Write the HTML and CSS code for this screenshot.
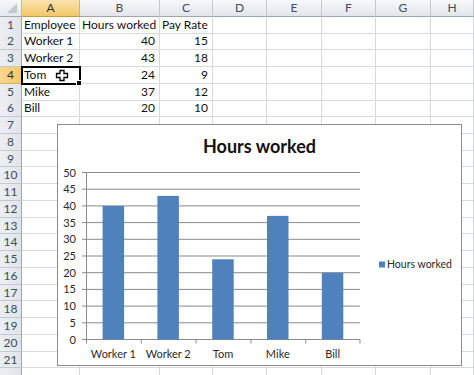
FILE: index.html
```html
<!DOCTYPE html>
<html>
<head>
<meta charset="utf-8">
<link rel="stylesheet" href="styles.css">
</head>
<body>
<div class="sheet">
  <div class="r hdr">
    <b class="corner"><svg width="22" height="17" viewBox="0 0 22 17"><polygon points="17,3 17,13 7,13" fill="#c3c8cf"/></svg></b>
    <b class="ch on">A</b><b class="ch">B</b><b class="ch">C</b><b class="ch">D</b><b class="ch">E</b><b class="ch">F</b><b class="ch">G</b><b class="ch">H</b>
  </div>
  <div class="r"><b class="rh">1</b><span>Employee</span><span>Hours worked</span><span>Pay Rate</span><span></span><span></span><span></span><span></span><span></span></div>
  <div class="r"><b class="rh">2</b><span>Worker 1</span><span class="n">40</span><span class="n">15</span><span></span><span></span><span></span><span></span><span></span></div>
  <div class="r"><b class="rh">3</b><span>Worker 2</span><span class="n">43</span><span class="n">18</span><span></span><span></span><span></span><span></span><span></span></div>
  <div class="r"><b class="rh on">4</b><span class="sel">Tom<svg class="cursor" width="14" height="13" viewBox="0 0 14 13"><path d="M5 1.5H9V4.5H12.5V8.5H9V11.5H5V8.5H1.5V4.5H5Z" fill="#fff" stroke="#000" stroke-width="1.3" stroke-linejoin="miter"/></svg></span><span class="n">24</span><span class="n">9</span><span></span><span></span><span></span><span></span><span></span></div>
  <div class="r"><b class="rh">5</b><span>Mike</span><span class="n">37</span><span class="n">12</span><span></span><span></span><span></span><span></span><span></span></div>
  <div class="r"><b class="rh">6</b><span>Bill</span><span class="n">20</span><span class="n">10</span><span></span><span></span><span></span><span></span><span></span></div>
  <div class="r"><b class="rh">7</b><span></span><span></span><span></span><span></span><span></span><span></span><span></span><span></span></div>
  <div class="r"><b class="rh">8</b><span></span><span></span><span></span><span></span><span></span><span></span><span></span><span></span></div>
  <div class="r"><b class="rh">9</b><span></span><span></span><span></span><span></span><span></span><span></span><span></span><span></span></div>
  <div class="r"><b class="rh">10</b><span></span><span></span><span></span><span></span><span></span><span></span><span></span><span></span></div>
  <div class="r"><b class="rh">11</b><span></span><span></span><span></span><span></span><span></span><span></span><span></span><span></span></div>
  <div class="r"><b class="rh">12</b><span></span><span></span><span></span><span></span><span></span><span></span><span></span><span></span></div>
  <div class="r"><b class="rh">13</b><span></span><span></span><span></span><span></span><span></span><span></span><span></span><span></span></div>
  <div class="r"><b class="rh">14</b><span></span><span></span><span></span><span></span><span></span><span></span><span></span><span></span></div>
  <div class="r"><b class="rh">15</b><span></span><span></span><span></span><span></span><span></span><span></span><span></span><span></span></div>
  <div class="r"><b class="rh">16</b><span></span><span></span><span></span><span></span><span></span><span></span><span></span><span></span></div>
  <div class="r"><b class="rh">17</b><span></span><span></span><span></span><span></span><span></span><span></span><span></span><span></span></div>
  <div class="r"><b class="rh">18</b><span></span><span></span><span></span><span></span><span></span><span></span><span></span><span></span></div>
  <div class="r"><b class="rh">19</b><span></span><span></span><span></span><span></span><span></span><span></span><span></span><span></span></div>
  <div class="r"><b class="rh">20</b><span></span><span></span><span></span><span></span><span></span><span></span><span></span><span></span></div>
  <div class="r"><b class="rh">21</b><span></span><span></span><span></span><span></span><span></span><span></span><span></span><span></span></div>
  <div class="r"><b class="rh"></b><span></span><span></span><span></span><span></span><span></span><span></span><span></span><span></span></div>

  <div class="chart">
    <svg class="plot" width="403" height="240" viewBox="0 0 403 240">
      <text class="title" x="201.5" y="27.7" text-anchor="middle">Hours worked</text>
      <g stroke="#8a8a8a" stroke-width="1">
        <line x1="24" x2="302" y1="47.5" y2="47.5"/>
        <line x1="24" x2="302" y1="64.2" y2="64.2"/>
        <line x1="24" x2="302" y1="80.9" y2="80.9"/>
        <line x1="24" x2="302" y1="97.6" y2="97.6"/>
        <line x1="24" x2="302" y1="114.3" y2="114.3"/>
        <line x1="24" x2="302" y1="131" y2="131"/>
        <line x1="24" x2="302" y1="147.7" y2="147.7"/>
        <line x1="24" x2="302" y1="164.4" y2="164.4"/>
        <line x1="24" x2="302" y1="181.1" y2="181.1"/>
        <line x1="24" x2="302" y1="197.8" y2="197.8"/>
        <line x1="24" x2="302" y1="214.5" y2="214.5"/>
        <line x1="28.5" x2="28.5" y1="47.5" y2="214.5"/>
        <line x1="28.5" x2="28.5" y1="214.5" y2="218.5"/>
        <line x1="83.3" x2="83.3" y1="214.5" y2="218.5"/>
        <line x1="138.1" x2="138.1" y1="214.5" y2="218.5"/>
        <line x1="192.9" x2="192.9" y1="214.5" y2="218.5"/>
        <line x1="247.7" x2="247.7" y1="214.5" y2="218.5"/>
        <line x1="302" x2="302" y1="214.5" y2="218.5"/>
      </g>
      <g fill="#4f81bd">
        <rect x="44.6" y="80.9" width="21.5" height="133.6"/>
        <rect x="99.4" y="70.9" width="21.5" height="143.6"/>
        <rect x="154.2" y="134.3" width="21.5" height="80.2"/>
        <rect x="209" y="90.9" width="21.5" height="123.6"/>
        <rect x="263.8" y="147.7" width="21.5" height="66.8"/>
      </g>
      <g class="ylab" text-anchor="end">
        <text x="18" y="51.5">50</text>
        <text x="18" y="68.2">45</text>
        <text x="18" y="84.9">40</text>
        <text x="18" y="101.6">35</text>
        <text x="18" y="118.3">30</text>
        <text x="18" y="135">25</text>
        <text x="18" y="151.7">20</text>
        <text x="18" y="168.4">15</text>
        <text x="18" y="185.1">10</text>
        <text x="18" y="201.8">5</text>
        <text x="18" y="218.5">0</text>
      </g>
      <g class="xlab" text-anchor="middle">
        <text x="55.4" y="232.7">Worker 1</text>
        <text x="110.2" y="232.7">Worker 2</text>
        <text x="165" y="232.7">Tom</text>
        <text x="219.8" y="232.7">Mike</text>
        <text x="274.6" y="232.7">Bill</text>
      </g>
      <rect x="321" y="136.5" width="6" height="6" fill="#4f81bd"/>
      <text class="leg" x="329" y="143">Hours worked</text>
    </svg>
  </div>
</div>
</body>
</html>
```
FILE: styles.css
```css
html, body {
  margin: 0;
  padding: 0;
  background: #fff;
}
.sheet {
  position: relative;
  width: 474px;
  height: 375px;
  overflow: hidden;
  font-family: Lato, "Noto Sans", sans-serif;
  font-size: 12px;
  color: #111;
}
.r {
  display: grid;
  grid-template-columns: 22px 58px 80px 53px 54px 55px 54px 55px 1fr;
  height: 16.75px;
}
.r.hdr {
  height: 16.6px;
}
.r > span {
  box-sizing: border-box;
  border-right: 1px solid #d6d9de;
  border-bottom: 1px solid #d6d9de;
  padding: 0 3px 0 2px;
  line-height: 16px;
  white-space: nowrap;
  overflow: visible;
  position: relative;
}
.r > span.n {
  text-align: right;
  padding-right: 4px;
}
.corner {
  display: block;
  box-sizing: border-box;
  background: linear-gradient(#f6f7f9, #e4e7eb);
  border-right: 1px solid #b5bac2;
  border-bottom: 1px solid #9fa6b0;
  overflow: hidden;
}
.corner svg {
  display: block;
}
.ch, .rh {
  display: block;
  box-sizing: border-box;
  font-weight: normal;
  font-size: 12px;
  color: #3f4c5e;
  text-align: center;
}
.ch {
  background: linear-gradient(#f7f8fa, #e2e6eb);
  border-right: 1px solid #c4c9d0;
  border-bottom: 1px solid #9fa6b0;
  line-height: 15.6px;
}
.rh {
  background: linear-gradient(90deg, #eceef2, #e1e5ea);
  border-right: 1px solid #9fa6b0;
  border-bottom: 1px solid #c4c9d0;
  line-height: 15.75px;
}
.ch.on {
  background: linear-gradient(#fae3b0, #f3c766);
  border-right-color: #d9b36a;
  border-bottom-color: #c59a45;
  color: #2e2e2e;
}
.rh.on {
  background: linear-gradient(90deg, #f8d78f, #f4c868);
  border-bottom-color: #d9b36a;
  color: #2e2e2e;
}
.r > span.sel {
  outline: 2px solid #000;
  outline-offset: -1px;
  z-index: 2;
}
.r > span.sel::after {
  content: "";
  position: absolute;
  right: -3px;
  bottom: -3px;
  width: 4px;
  height: 4px;
  background: #000;
  border: 1px solid #fff;
}
.cursor {
  position: absolute;
  left: 33px;
  top: 2px;
}
.chart {
  position: absolute;
  left: 57px;
  top: 124px;
  width: 403px;
  height: 240px;
  border: 1px solid #8c8c8c;
  background: #fff;
  z-index: 3;
}
.plot {
  display: block;
}
.title {
  font-family: Lato, "Noto Sans", sans-serif;
  font-weight: bold;
  font-size: 18px;
  fill: #111;
}
.ylab text, .xlab text {
  font-family: Lato, "Noto Sans", sans-serif;
  font-size: 11px;
  fill: #2a2a2a;
}
.leg {
  font-family: Lato, "Noto Sans", sans-serif;
  font-size: 10.5px;
  fill: #2a2a2a;
}
```
